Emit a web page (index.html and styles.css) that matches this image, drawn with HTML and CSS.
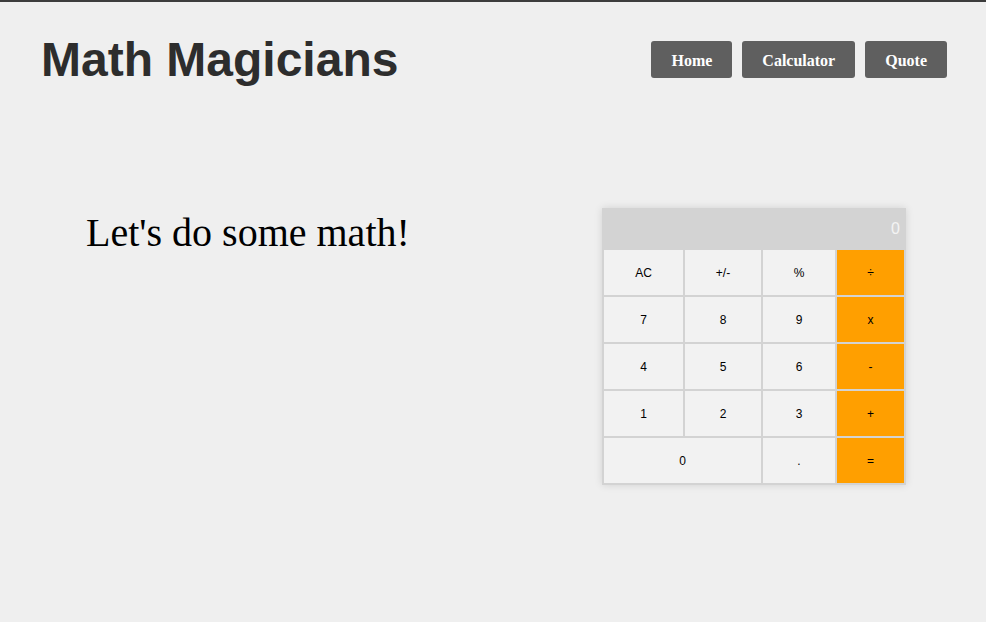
FILE: index.html
```html
<!DOCTYPE html>
<html>
<head>
<meta charset="utf-8">
<link rel="stylesheet" href="styles.css">
</head>
<body>
<div class="page">
  <header class="header">
    <h1 class="logo">Math Magicians</h1>
    <nav class="nav">
      <a class="nav-btn" href="#">Home</a>
      <a class="nav-btn" href="#">Calculator</a>
      <a class="nav-btn" href="#">Quote</a>
    </nav>
  </header>
  <main class="main">
    <h2 class="intro">Let's do some math!</h2>
    <div class="calc">
      <div class="display">0</div>
      <div class="keys">
        <button class="key">AC</button>
        <button class="key">+/-</button>
        <button class="key">%</button>
        <button class="key op">÷</button>
        <button class="key">7</button>
        <button class="key">8</button>
        <button class="key">9</button>
        <button class="key op">x</button>
        <button class="key">4</button>
        <button class="key">5</button>
        <button class="key">6</button>
        <button class="key op">-</button>
        <button class="key">1</button>
        <button class="key">2</button>
        <button class="key">3</button>
        <button class="key op">+</button>
        <button class="key zero">0</button>
        <button class="key">.</button>
        <button class="key op">=</button>
      </div>
    </div>
  </main>
</div>
</body>
</html>
```
FILE: styles.css
```css
html, body {
  margin: 0;
  padding: 0;
  height: 100%;
}
body {
  background: #efefef;
  border-top: 2px solid #3c3c3c;
  box-sizing: border-box;
  font-family: "Liberation Sans", Arial, sans-serif;
}
.page {
  padding: 0 39px 0 41px;
}
.header {
  display: flex;
  justify-content: space-between;
  align-items: flex-start;
  padding-top: 30px;
}
.logo {
  margin: 0;
  font-size: 48px;
  font-weight: bold;
  color: #2d2d2d;
  line-height: 56px;
}
.nav {
  display: flex;
  gap: 10px;
  margin-top: 9px;
}
.nav-btn {
  display: flex;
  align-items: center;
  justify-content: center;
  height: 37px;
  padding: 2px 20px 0 20px;
  box-sizing: border-box;
  background: #5f5f5f;
  color: #fff;
  border-radius: 3px;
  text-decoration: none;
  font-family: "Liberation Serif", "Times New Roman", serif;
  font-weight: bold;
  font-size: 16px;
}
.main {
  display: flex;
  justify-content: space-between;
  align-items: flex-start;
  margin-top: 120px;
  padding-left: 45px;
  padding-right: 41px;
}
.intro {
  margin: 2px 0 0 0;
  font-family: "Liberation Serif", "Times New Roman", serif;
  font-weight: normal;
  font-size: 40px;
  line-height: 46px;
  color: #000;
}
.calc {
  width: 304px;
  background: #d3d3d3;
  box-shadow: 0 0 8px rgba(0, 0, 0, 0.12);
}
.display {
  height: 42px;
  display: flex;
  align-items: center;
  justify-content: flex-end;
  padding-right: 6px;
  color: #f4f4f4;
  font-size: 16px;
}
.keys {
  display: grid;
  grid-template-columns: 79px 76px 72px 67px;
  grid-auto-rows: 45px;
  gap: 2px;
  padding: 0 2px 2px 2px;
}
.key {
  border: none;
  margin: 0;
  padding: 0;
  background: #f2f2f2;
  font-family: "Liberation Sans", Arial, sans-serif;
  font-size: 12px;
  color: #000;
}
.key.op {
  background: #ff9f00;
}
.key.zero {
  grid-column: span 2;
}
```
